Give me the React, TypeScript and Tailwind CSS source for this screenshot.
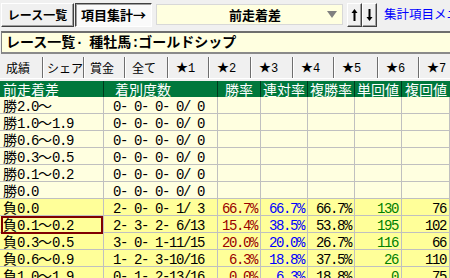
import React from "react";

type Row = {
  label: string;
  record: string;
  win?: string;
  ren?: string;
  fuku?: string;
  tan?: string;
  fkv?: string;
  hot?: boolean;
  selected?: boolean;
};

const rows: Row[] = [
  { label: "勝2.0〜", record: "0- 0- 0- 0/ 0" },
  { label: "勝1.0〜1.9", record: "0- 0- 0- 0/ 0" },
  { label: "勝0.6〜0.9", record: "0- 0- 0- 0/ 0" },
  { label: "勝0.3〜0.5", record: "0- 0- 0- 0/ 0" },
  { label: "勝0.1〜0.2", record: "0- 0- 0- 0/ 0" },
  { label: "勝0.0", record: "0- 0- 0- 0/ 0" },
  { label: "負0.0", record: "2- 0- 0- 1/ 3", win: "66.7%", ren: "66.7%", fuku: "66.7%", tan: "130", fkv: "76", hot: true },
  { label: "負0.1〜0.2", record: "2- 3- 2- 6/13", win: "15.4%", ren: "38.5%", fuku: "53.8%", tan: "195", fkv: "102", hot: true, selected: true },
  { label: "負0.3〜0.5", record: "3- 0- 1-11/15", win: "20.0%", ren: "20.0%", fuku: "26.7%", tan: "116", fkv: "66", hot: true },
  { label: "負0.6〜0.9", record: "1- 2- 3-10/16", win: "6.3%", ren: "18.8%", fuku: "37.5%", tan: "26", fkv: "110", hot: true },
  { label: "負1.0〜1.9", record: "0- 1- 2-13/16", win: "0.0%", ren: "6.3%", fuku: "18.8%", tan: "0", fkv: "75", hot: true },
];

const tabs = [
  { t: "成績", w: "w-[42px] pl-[6px]" },
  { t: "シェア", w: "w-[41px] pl-[4px]" },
  { t: "賞金", w: "w-[41px] pl-[6px]" },
  { t: "全て", w: "w-[43px] pl-[7px]" },
  { t: "★1", w: "w-[41px] pl-[8px]" },
  { t: "★2", w: "w-[42px] pl-[8px]" },
  { t: "★3", w: "w-[42px] pl-[8px]" },
  { t: "★4", w: "w-[41px] pl-[8px]" },
  { t: "★5", w: "w-[44px] pl-[8px]" },
  { t: "★6", w: "w-[41px] pl-[8px]" },
  { t: "★7", w: "w-[42px] pl-[8px]" },
];

// 全角はCJKフォント、半角は等幅フォントを半分の幅に詰めて表示
function Txt({ s }: { s: string }) {
  const runs = s.match(/[\x00-\xff]+|[^\x00-\xff]+/g) ?? [];
  return (
    <span className="whitespace-pre">
      {runs.map((r, i) =>
        r.charCodeAt(0) > 0xff ? (
          <span key={i} className="font-['Noto_Sans_CJK_JP',sans-serif]">
            {r}
          </span>
        ) : (
          <span key={i} className="font-['Liberation_Mono',monospace] tracking-[-0.1em]">
            {r}
          </span>
        )
      )}
    </span>
  );
}

const cols = "grid grid-cols-[104px_114px_43px_47px_47px_47px_48px]";

function Num({ v, color }: { v?: string; color: string }) {
  return (
    <div className={`border-r border-[#c0c0c0] pr-[3px] text-right ${color}`}>
      {v ? <Txt s={v} /> : null}
    </div>
  );
}

const raised = "border border-t-white border-l-white border-r-[#404040] border-b-[#404040] shadow-[inset_-1px_-1px_0_#a0a0a0]";

const App = () => {
  return (
    <div className="w-[450px] h-[278px] overflow-hidden bg-[#f0f0f0] text-black font-['Noto_Sans_CJK_JP',sans-serif]">
      {/* top bar */}
      <div className="flex items-start h-[31px] pt-[3px] pl-[1px] overflow-hidden">
        <button className={`shrink-0 h-[24px] w-[73px] px-0 bg-[#f0f0f0] ${raised} text-[12px] font-bold leading-[22px] text-center whitespace-nowrap`}>
          レース一覧
        </button>
        <button className="shrink-0 ml-[1px] h-[24px] w-[77px] px-0 bg-[#fafafa] border border-t-[#404040] border-l-[#404040] border-r-white border-b-white shadow-[inset_1px_1px_0_#a0a0a0] text-[13px] font-bold leading-[22px] text-center whitespace-nowrap">
          項目集計→
        </button>
        <div className="shrink-0 ml-[4px] mt-[1px] h-[21px] w-[187px] bg-[#ffffe0] border border-[#d8d8d8] flex items-center">
          <span className="flex-1 text-center text-[13px] font-bold leading-[19px] pl-[26px]">前走着差</span>
          <svg width="10" height="7" viewBox="0 0 10 7" className="mr-[5px]">
            <polygon points="0,0 10,0 5,7" fill="#808080" />
          </svg>
        </div>
        <div className="shrink-0 ml-[4px] flex">
          <button className={`h-[24px] w-[15px] px-0 bg-[#f0f0f0] ${raised} flex items-center justify-center`}>
            <svg width="7" height="14" viewBox="0 0 7 14">
              <path d="M3.5 1 L0.5 5 H2.5 V13 H4.5 V5 H6.5 Z" fill="#000" />
            </svg>
          </button>
          <button className={`h-[24px] w-[15px] px-0 bg-[#f0f0f0] ${raised} flex items-center justify-center`}>
            <svg width="7" height="14" viewBox="0 0 7 14">
              <path d="M3.5 13 L0.5 9 H2.5 V1 H4.5 V9 H6.5 Z" fill="#000" />
            </svg>
          </button>
        </div>
        <span className="shrink-0 ml-[7px] mt-[3px] text-[12.5px] leading-[16px] text-[#0000ff] whitespace-nowrap">集計項目メニュー</span>
      </div>

      {/* title */}
      <div className="ml-[1px] h-[23px] bg-[#ffffe0] border-l border-l-[#808080] border-t-2 border-t-[#6e6e6e] border-b-2 border-b-[#8a8a8a] flex items-center pl-[4px] text-[14px] font-bold leading-[19px]">
        <Txt s="レース一覧· 種牡馬:ゴールドシップ" />
      </div>

      {/* tabs */}
      <div className="flex h-[21px] mt-[3px] text-[12px] leading-[20px]">
        {tabs.map((tb, i) => (
          <div
            key={tb.t}
            className={`${tb.w} shrink-0 flex items-center whitespace-nowrap ${i === 0 ? "" : "border-l border-l-[#6e6e6e] shadow-[inset_1px_0_0_#ffffff]"}`}
          >
            <Txt s={tb.t} />
          </div>
        ))}
      </div>
      <div className="h-[3px] border-t border-t-white" />

      {/* table */}
      <div className={`${cols} h-[16px] bg-[#00783c] text-white text-[14px] leading-[16px]`}>
        <div className="pl-[3px] border-r border-[#003a1c]">前走着差</div>
        <div className="pl-[11px] border-r border-[#003a1c]">着別度数</div>
        <div className="text-center border-r border-[#003a1c]">勝率</div>
        <div className="text-center border-r border-[#003a1c]">連対率</div>
        <div className="text-center border-r border-[#003a1c]">複勝率</div>
        <div className="text-center border-r border-[#003a1c]">単回値</div>
        <div className="text-center">複回値</div>
      </div>
      {rows.map((r) => (
        <div
          key={r.label}
          className={`${cols} h-[17px] border-b border-[#c0c0c0] text-[14px] leading-[16px] ${r.hot ? "bg-[#ffff99]" : "bg-[#ffffe0]"}`}
        >
          <div
            className={`border-r border-[#c0c0c0] ${r.selected ? "shadow-[inset_0_0_0_2px_#800000] ml-[1px] pl-[2px]" : "pl-[3px]"}`}
          >
            <Txt s={r.label} />
          </div>
          <div className="pl-[9px] border-r border-[#c0c0c0]">
            <Txt s={r.record} />
          </div>
          <Num v={r.win} color="text-[#990000]" />
          <Num v={r.ren} color="text-[#0000ff]" />
          <Num v={r.fuku} color="text-black" />
          <Num v={r.tan} color="text-[#008000]" />
          <Num v={r.fkv} color="text-black" />
        </div>
      ))}
    </div>
  );
};

export default App;
